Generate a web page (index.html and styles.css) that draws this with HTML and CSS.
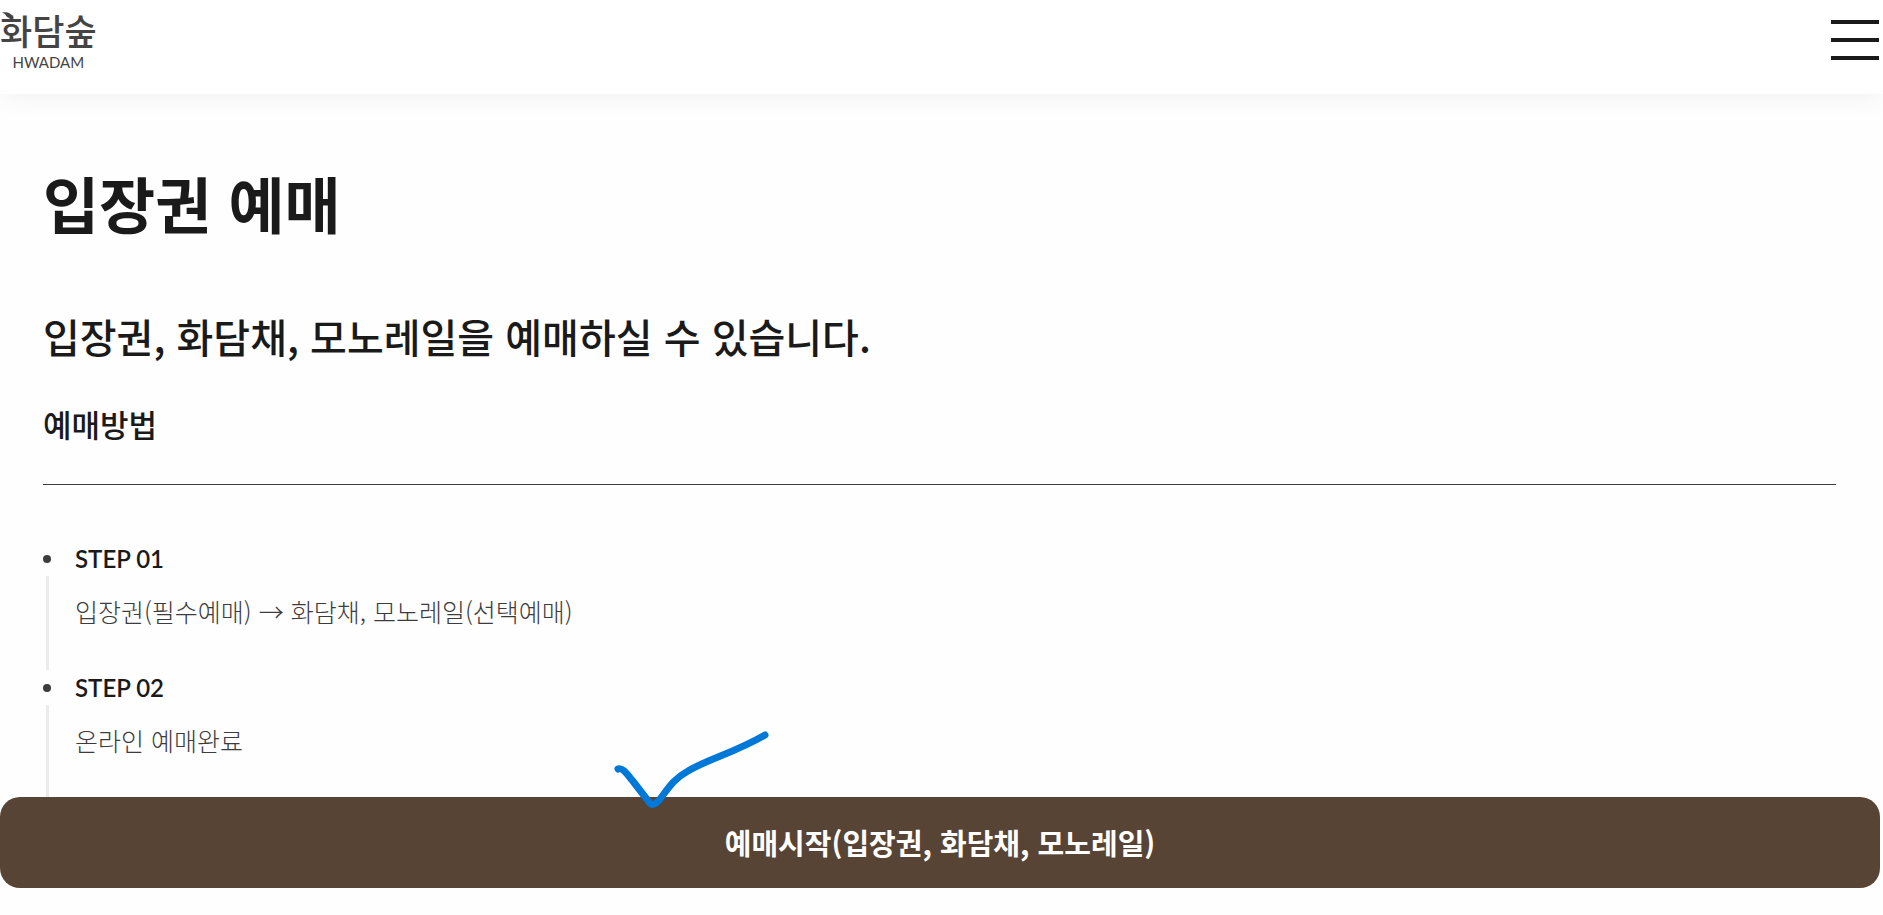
FILE: index.html
```
<!DOCTYPE html>
<html lang="ko">
<head>
  <meta charset="utf-8">
  <meta name="viewport" content="width=device-width, initial-scale=1">
  <title>화담숲 입장권 예매</title>
  <link rel="stylesheet" href="styles.css">
</head>
<body>
  <header class="header">
    <a href="#" class="logo">
      <svg class="logo-leaf" viewBox="0 0 12 7" aria-hidden="true"><path d="M0 0.5C5-0.5 10 1 11.500 6.500C7 6.500 4 5 3 2Z"/></svg>
      <span class="logo-ko">화담숲</span>
      <span class="logo-en">HWADAM</span>
    </a>
    <button type="button" class="menu" aria-label="메뉴 열기">
      <span></span>
      <span></span>
      <span></span>
    </button>
  </header>

  <main class="content">
    <h1>입장권 예매</h1>
    <h2>입장권, 화담채, 모노레일을 예매하실 수 있습니다.</h2>
    <h3>예매방법</h3>
    <ol class="steps">
      <li class="step">
        <div class="step-text">
          <strong>STEP 01</strong>
          <p>입장권(필수예매) → 화담채, 모노레일(선택예매)</p>
        </div>
      </li>
      <li class="step">
        <div class="step-text">
          <strong>STEP 02</strong>
          <p>온라인 예매완료</p>
        </div>
      </li>
    </ol>
  </main>

  <div class="booking">
    <button type="button" class="booking-btn">예매시작(입장권, 화담채, 모노레일)</button>
    <svg class="check" viewBox="610 725 164 90" aria-hidden="true">
      <path d="M618 769C622 767 627 774 632 780L649 802C652 806 655 805 660 799C668 789 672 780 688 771C708 759 734 753 765 735"/>
    </svg>
  </div>
</body>
</html>
```
FILE: styles.css
```
* {
  margin: 0;
  padding: 0;
  box-sizing: border-box;
}
body {
  background-color: #fefefe;
  color: #1a1a1a;
  font-family: Lato, "Noto Sans CJK KR", sans-serif;
}
button {
  border: 0;
  font-family: inherit;
  cursor: pointer;
}

/* header */
.header {
  display: flex;
  justify-content: space-between;
  align-items: flex-start;
  height: 94px;
  padding: 6px 4px 0 0;
  background-color: #fff;
  box-shadow: 0 4px 24px rgba(0, 0, 0, .05);
}
.logo {
  position: relative;
  display: flex;
  flex-direction: column;
  align-items: center;
  color: #444;
  text-decoration: none;
}
.logo-leaf {
  position: absolute;
  top: 6px;
  left: 2px;
  width: 12px;
  height: 7px;
  fill: #444;
}
.logo-ko {
  font-family: "Noto Sans CJK KR", sans-serif;
  font-size: 35px;
  font-weight: 500;
  line-height: 48px;
}
.logo-en {
  font-size: 15px;
  line-height: 16px;
}
.menu {
  display: flex;
  flex-direction: column;
  justify-content: space-between;
  width: 48px;
  height: 40px;
  margin-top: 14px;
  background: none;
}
.menu span {
  height: 4px;
  background-color: #1a1a1a;
}

/* content */
.content {
  padding: 69px 47px 0 43px;
}
h1, h2, h3, .booking-btn {
  font-family: "Noto Sans CJK KR", sans-serif;
}
h1 {
  margin-bottom: 63px;
  font-size: 61px;
  font-weight: 700;
  line-height: 80px;
}
h2 {
  margin-bottom: 36px;
  font-size: 40px;
  font-weight: 500;
  line-height: 60px;
}
h3 {
  padding-bottom: 38px;
  border-bottom: 1px solid #3c3c3c;
  font-size: 31px;
  font-weight: 500;
  line-height: 44px;
}
.steps {
  margin-top: 56px;
  list-style: none;
}
.step {
  display: grid;
  grid-template-columns: 8px 1fr;
  grid-template-rows: 35px 1fr;
  column-gap: 24px;
}
/* dot and the line under it */
.step::before {
  content: "";
  width: 8px;
  height: 8px;
  margin-top: 14px;
  border-radius: 50%;
  background-color: #3c3c3c;
}
.step::after {
  content: "";
  grid-column: 1;
  grid-row: 2;
  justify-self: center;
  width: 3px;
  background-color: #ebebeb;
}
.step-text {
  grid-column: 2;
  grid-row: 1 / 3;
  padding-bottom: 41px;
  line-height: 36px;
}
.step-text strong {
  display: block;
  font-size: 24px;
  font-weight: 600;
}
.step-text p {
  margin-top: 16px;
  color: #3c3c3c;
  font-family: "Noto Sans CJK KR", sans-serif;
  font-size: 25px;
  font-weight: 300;
}

/* bottom button */
.booking {
  position: fixed;
  right: 3px;
  bottom: 27px;
  left: 0;
}
.booking-btn {
  display: block;
  width: 100%;
  padding: 23px 20px 24px;
  border-radius: 20px;
  background-color: #574435;
  color: #fff;
  font-size: 29px;
  font-weight: 700;
  line-height: 44px;
}
.check {
  position: absolute;
  top: -72px;
  left: calc(50% - 330px);
  width: 164px;
  height: 90px;
  fill: none;
  stroke: #0078d7;
  stroke-width: 7px;
  stroke-linecap: round;
  stroke-linejoin: round;
  pointer-events: none;
}
```
